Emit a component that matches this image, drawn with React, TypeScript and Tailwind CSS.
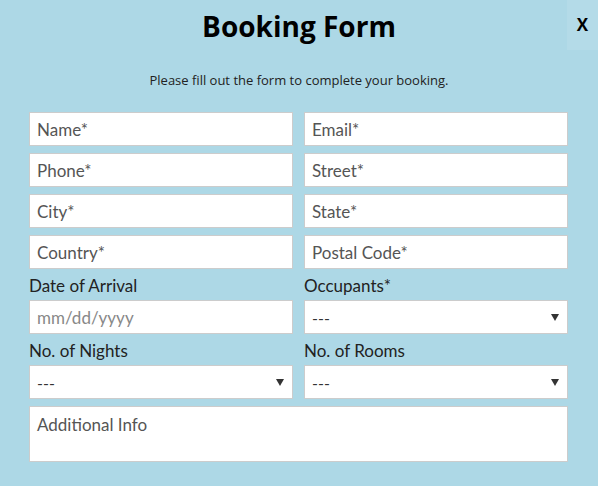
import React from "react";

const inputCls =
  "h-[34px] w-full bg-white border border-[#cccccc] px-[7px] text-[17px] text-[#333] placeholder:text-[#555] outline-none";

function Select() {
  return (
    <div className="relative h-[34px] w-full bg-white border border-[#cccccc]">
      <select className="h-full w-full appearance-none bg-transparent px-[7px] pt-[2px] text-[16px] text-[#333] outline-none">
        <option>---</option>
      </select>
      <span className="pointer-events-none absolute right-[8px] top-[13px] h-0 w-0 border-x-[4px] border-t-[7px] border-x-transparent border-t-[#333]" />
    </div>
  );
}

function Label({ children }: { children: React.ReactNode }) {
  return <label className="block text-[17px] leading-[20px] pb-[4px] text-[#222]">{children}</label>;
}

export default function App() {
  return (
    <div
      className="relative min-h-[486px] w-[598px] bg-[#add8e6]"
      style={{ fontFamily: "Lato, 'Liberation Sans', sans-serif" }}
    >
      <button className="absolute right-0 top-0 h-[50px] w-[31px] bg-[#b4dbe8] text-[17px] font-bold text-black font-['Open_Sans',sans-serif]">
        X
      </button>

      <h1 className="pt-[8px] text-center text-[28px] leading-[36px] font-bold text-black font-['Open_Sans',sans-serif]">
        Booking Form
      </h1>
      <p className="mt-[28px] text-center text-[13px] leading-[16px] text-[#222] font-['Open_Sans',sans-serif]">
        Please fill out the form to complete your booking.
      </p>

      <form className="mt-[24px] ml-[29px] grid w-[539px] grid-cols-2 gap-x-[11px] gap-y-[7px]">
        <input className={inputCls} placeholder="Name*" />
        <input className={inputCls} placeholder="Email*" />
        <input className={inputCls} placeholder="Phone*" />
        <input className={inputCls} placeholder="Street*" />
        <input className={inputCls} placeholder="City*" />
        <input className={inputCls} placeholder="State*" />
        <input className={inputCls} placeholder="Country*" />
        <input className={inputCls} placeholder="Postal Code*" />
        <div>
          <Label>Date of Arrival</Label>
          <input className={inputCls + " placeholder:text-[#888]"} placeholder="mm/dd/yyyy" />
        </div>
        <div>
          <Label>Occupants*</Label>
          <Select />
        </div>
        <div>
          <Label>No. of Nights</Label>
          <Select />
        </div>
        <div>
          <Label>No. of Rooms</Label>
          <Select />
        </div>
        <textarea
          className="col-span-2 h-[56px] resize-none bg-white border border-[#cccccc] px-[7px] pt-[8px] text-[17px] leading-[20px] text-[#333] placeholder:text-[#555] outline-none"
          placeholder="Additional Info"
        />
      </form>
    </div>
  );
}
